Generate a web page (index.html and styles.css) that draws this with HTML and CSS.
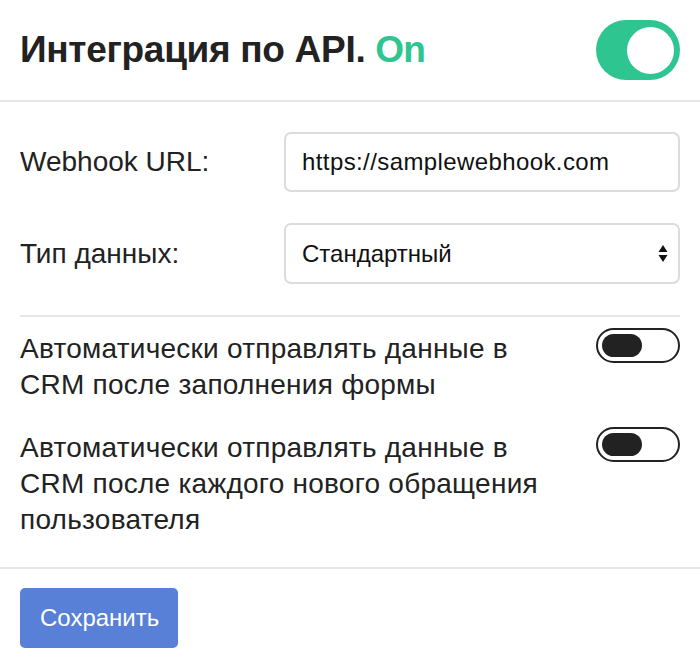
FILE: index.html
```html
<!DOCTYPE html>
<html lang="ru">
<head>
<meta charset="utf-8">
<link rel="stylesheet" href="styles.css">
</head>
<body>
<div class="panel">
  <div class="header">
    <h1 class="title">Интеграция по API. <span class="on">On</span></h1>
    <div class="switch-big"><div class="knob-big"></div></div>
  </div>
  <div class="content">
    <div class="form-row first">
      <label class="label">Webhook URL:</label>
      <input class="field" type="text" value="https://samplewebhook.com">
    </div>
    <div class="form-row">
      <label class="label">Тип данных:</label>
      <div class="select-wrap">
        <select class="field select"><option>Стандартный</option></select>
        <svg class="arrows" width="10" height="20" viewBox="0 0 10 20"><path d="M5 1 L9.5 8 L0.5 8 Z M0.5 11 L9.5 11 L5 18 Z" fill="#111"/></svg>
      </div>
    </div>
    <div class="divider"></div>
    <div class="opt-row">
      <div class="opt-text">Автоматически отправлять данные в<br>CRM после заполнения формы</div>
      <div class="switch-small"><div class="knob-small"></div></div>
    </div>
    <div class="opt-row second">
      <div class="opt-text">Автоматически отправлять данные в<br>CRM после каждого нового обращения<br>пользователя</div>
      <div class="switch-small"><div class="knob-small"></div></div>
    </div>
  </div>
  <div class="footer">
    <button class="save">Сохранить</button>
  </div>
</div>
</body>
</html>
```
FILE: styles.css
```css
html, body {
  margin: 0;
  padding: 0;
  background: #fff;
}
body {
  font-family: "Liberation Sans", Arial, sans-serif;
  color: #222;
}
.header {
  height: 100px;
  display: flex;
  align-items: center;
  justify-content: space-between;
  padding: 0 20px;
  border-bottom: 2px solid #e6e6e6;
}
.title {
  margin: 0;
  font-size: 37px;
  font-weight: bold;
  color: #222;
  letter-spacing: -0.3px;
}
.on {
  color: #2ec590;
  letter-spacing: -0.8px;
}
.switch-big {
  width: 84px;
  height: 60px;
  border-radius: 30px;
  background: #2ec590;
  display: flex;
  align-items: center;
  justify-content: flex-end;
  padding: 0 6px;
  box-sizing: border-box;
}
.knob-big {
  width: 47px;
  height: 47px;
  border-radius: 50%;
  background: #fff;
}
.content {
  padding: 30px 20px 0;
}
.form-row {
  display: grid;
  grid-template-columns: 264px 1fr;
  align-items: center;
  margin-bottom: 31px;
}
.label {
  font-size: 28px;
  color: #222;
}
.field {
  box-sizing: border-box;
  width: 100%;
  height: 60px;
  border: 2px solid #dcdcdc;
  border-radius: 7px;
  padding: 0 16px;
  font-family: "Liberation Sans", Arial, sans-serif;
  font-size: 24px;
  color: #111;
  background: #fff;
  outline: none;
}
input.field {
  letter-spacing: 0.4px;
}
.select-wrap {
  position: relative;
}
.select {
  -webkit-appearance: none;
  appearance: none;
  height: 61px;
}
.arrows {
  position: absolute;
  right: 12px;
  top: 21px;
}
.divider {
  height: 2px;
  background: #e6e6e6;
  margin-bottom: 14px;
}
.opt-row {
  display: flex;
  justify-content: space-between;
  align-items: flex-start;
}
.opt-row.second {
  margin-top: 27px;
}
.opt-text {
  font-size: 28px;
  line-height: 36px;
  color: #222;
  white-space: nowrap;
  letter-spacing: 0.25px;
}
.switch-small {
  width: 84px;
  height: 35px;
  border: 2px solid #222;
  border-radius: 18px;
  box-sizing: border-box;
  padding: 0 4px;
  display: flex;
  align-items: center;
  flex-shrink: 0;
  margin-top: -3px;
}
.knob-small {
  width: 40px;
  height: 23px;
  border-radius: 12px;
  background: #222;
}
.footer {
  margin-top: 29px;
  border-top: 2px solid #e6e6e6;
  padding: 19px 20px 0;
}
.save {
  height: 60px;
  padding: 0 19px 0 20px;
  background: #5880d6;
  color: #fff;
  border: none;
  border-radius: 5px;
  font-family: "Liberation Sans", Arial, sans-serif;
  font-size: 24px;
}
```
